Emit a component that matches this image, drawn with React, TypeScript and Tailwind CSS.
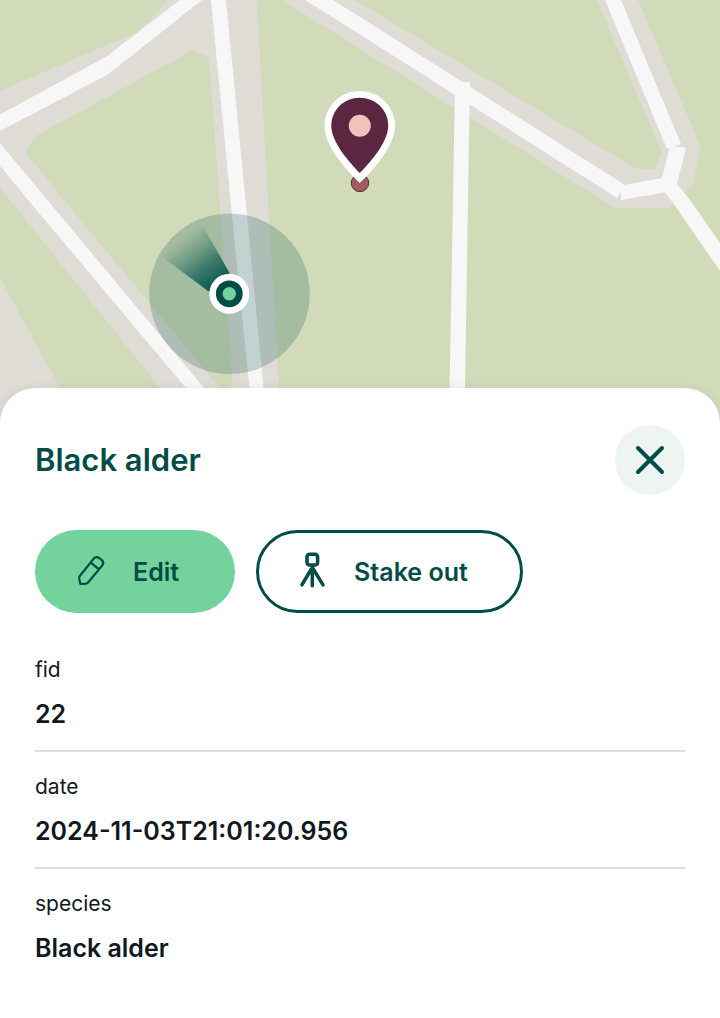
function MapView() {
  return (
    <svg viewBox="0 0 720 430" className="block w-full" role="img" aria-label="Map">
      <defs>
        <linearGradient id="heading" gradientUnits="userSpaceOnUse" x1="178" y1="230" x2="220" y2="285">
          <stop offset="0" stopColor="#c9cdaa" stopOpacity="0.25" />
          <stop offset="0.3" stopColor="#6f9c84" stopOpacity="0.6" />
          <stop offset="0.65" stopColor="#2a7063" stopOpacity="0.85" />
          <stop offset="1" stopColor="#0a544c" />
        </linearGradient>
      </defs>
      <rect width="720" height="430" fill="#d1dab9" />
      <g fill="#dfdcd5">
        <path d="M282 0 L360 49 L602 200 L613 208 H669 L685 192 L693 185 L700 145 L638 0 H597 L662 153 L654 169 H637 L355 0 Z" />
        <path d="M167 0 L153 17 L137 32 L0 91 V188 L10 200 L160 388 L192 430 H281 L279 388 L268 200 L257 2 L260 0 Z" />
        <path d="M0 278 L60 388 L83 430 H0 Z" />
        <circle cx="0" cy="72.500" r="1.500" />
      </g>
      <path d="M193 50 L209 58 L219.500 200 L232.500 383 L228 388 H220 L64 200 L26 153 L34 137 Z" fill="#d1dab9" />
      <g fill="#f7f7f7">
        <path d="M0 114.500 L100 60 L107 56 L180 0 H202 L115 69 L105 76 L0 131 Z" />
        <path d="M211 0 H226 L245.500 200 L263.500 388 L267 430 H253 L249.500 388 L230.500 200 Z" />
        <path d="M0 143 L47.500 200 L204 388 L239 430 H221 L186 388 L28 200 L0 166 Z" />
        <path d="M305 0 H333 L360 17 L625 185 L617 198 L360 34.500 Z" />
        <path d="M621 185.500 L662 178 L670 146 L686 147.500 L677 184 L690 200 L720 243 V271 L671 200 L665 192.500 L621 200 Z" />
        <path d="M605 0 H621 L681 144 L667 149 Z" />
        <path d="M455 82 H470 L468 200 L465 388 V430 H449.500 V388 L453 200 Z" />
      </g>
      <circle cx="229.500" cy="293.700" r="80.300" fill="#004c46" fillOpacity="0.21" />
      <path d="M161 256 Q175 232 200 221 L229.500 273 L225 296 L208 291 Z" fill="url(#heading)" />
      <circle cx="229.300" cy="293.800" r="20" fill="#fff" />
      <circle cx="229.300" cy="293.800" r="13.400" fill="#004c46" />
      <circle cx="229.300" cy="293.800" r="6.700" fill="#74d29c" />
      <circle cx="360" cy="183" r="8.700" fill="#a35b5f" stroke="#4d3536" strokeWidth="1" />
      <path d="M359.700 91 C340 91 324.500 106.500 324.500 126 C324.500 144 342 166 359.700 183 C377.500 166 395 144 395 126 C395 106.500 379.500 91 359.700 91 Z" fill="#fff" />
      <path d="M359.700 97.700 C344 97.700 331.300 110 331.300 125.700 C331.300 140 345 158 359.700 173 C374.500 158 388.200 140 388.200 125.700 C388.200 110 375.500 97.700 359.700 97.700 Z" fill="#5a2640" />
      <circle cx="359.800" cy="125.700" r="11" fill="#efc2bc" />
    </svg>
  );
}

function PencilIcon() {
  return (
    <svg viewBox="0 0 40 40" className="size-10" fill="none" stroke="#004c46" strokeWidth="2.200" strokeLinejoin="round" strokeLinecap="round" aria-hidden="true">
      <path d="M8.600 24.300 L22.700 6.600 Q25.200 3.800 28.200 6 L30.800 8.100 Q33.400 10.500 31.300 13.400 L17.300 30.300 Q16.300 31.500 14.700 31.600 L9.300 31.800 L8.200 26.500 Q8 25.200 8.600 24.300 Z M19.800 10.600 L27.700 17.200" />
    </svg>
  );
}

function TripodIcon() {
  return (
    <svg viewBox="0 0 40 40" className="size-10" fill="none" stroke="#004c46" strokeWidth="3.500" strokeLinecap="round" strokeLinejoin="round" aria-hidden="true">
      <rect x="15" y="2.300" width="10.600" height="10.800" rx="2.600" />
      <path d="M20.300 14 V33.800 M20.300 15.500 L9.900 32.800 M20.300 15.500 L31 32.800" />
    </svg>
  );
}

const fields = [
  { name: "fid", value: "22" },
  { name: "date", value: "2024-11-03T21:01:20.956" },
  { name: "species", value: "Black alder" },
];

export default function App() {
  return (
    <div className="min-h-screen bg-white font-['Inter',sans-serif] text-[#12181f]">
      <MapView />
      <main className="relative -mt-[42px] rounded-t-[35px] bg-white px-[35px] pt-[37px] pb-10 shadow-[0_0_10px_rgba(0,0,0,0.08)]">
        <header className="flex items-center justify-between">
          <h1 className="text-[31px] leading-10 font-semibold text-[#004c46]">Black alder</h1>
          <button type="button" aria-label="Close" className="flex size-[70px] items-center justify-center rounded-full bg-[#edf4f2]">
            <svg viewBox="0 0 40 40" className="size-10" stroke="#004c46" strokeWidth="4" strokeLinecap="round" aria-hidden="true">
              <path d="M8 8 L32 32 M32 8 L8 32" />
            </svg>
          </button>
        </header>
        <div className="mt-[35px] flex gap-[21px] text-[25px] leading-8 font-semibold text-[#004c46]">
          <button type="button" className="flex h-[83px] items-center gap-[22px] rounded-full bg-[#74d29c] pr-14 pl-9">
            <PencilIcon />
            Edit
          </button>
          <button type="button" className="flex h-[83px] items-center gap-[22px] rounded-full border-3 border-[#004c46] pr-[52px] pl-[33px]">
            <TripodIcon />
            Stake out
          </button>
        </div>
        <dl className="mt-[22px]">
          {fields.map((field) => (
            <div key={field.name} className="border-b-2 border-[#dedede] pt-[19px] pb-5 last:border-b-0">
              <dt className="text-[21px] leading-8">{field.name}</dt>
              <dd className="mt-3 text-[25px] leading-8 font-semibold">{field.value}</dd>
            </div>
          ))}
        </dl>
      </main>
    </div>
  );
}
